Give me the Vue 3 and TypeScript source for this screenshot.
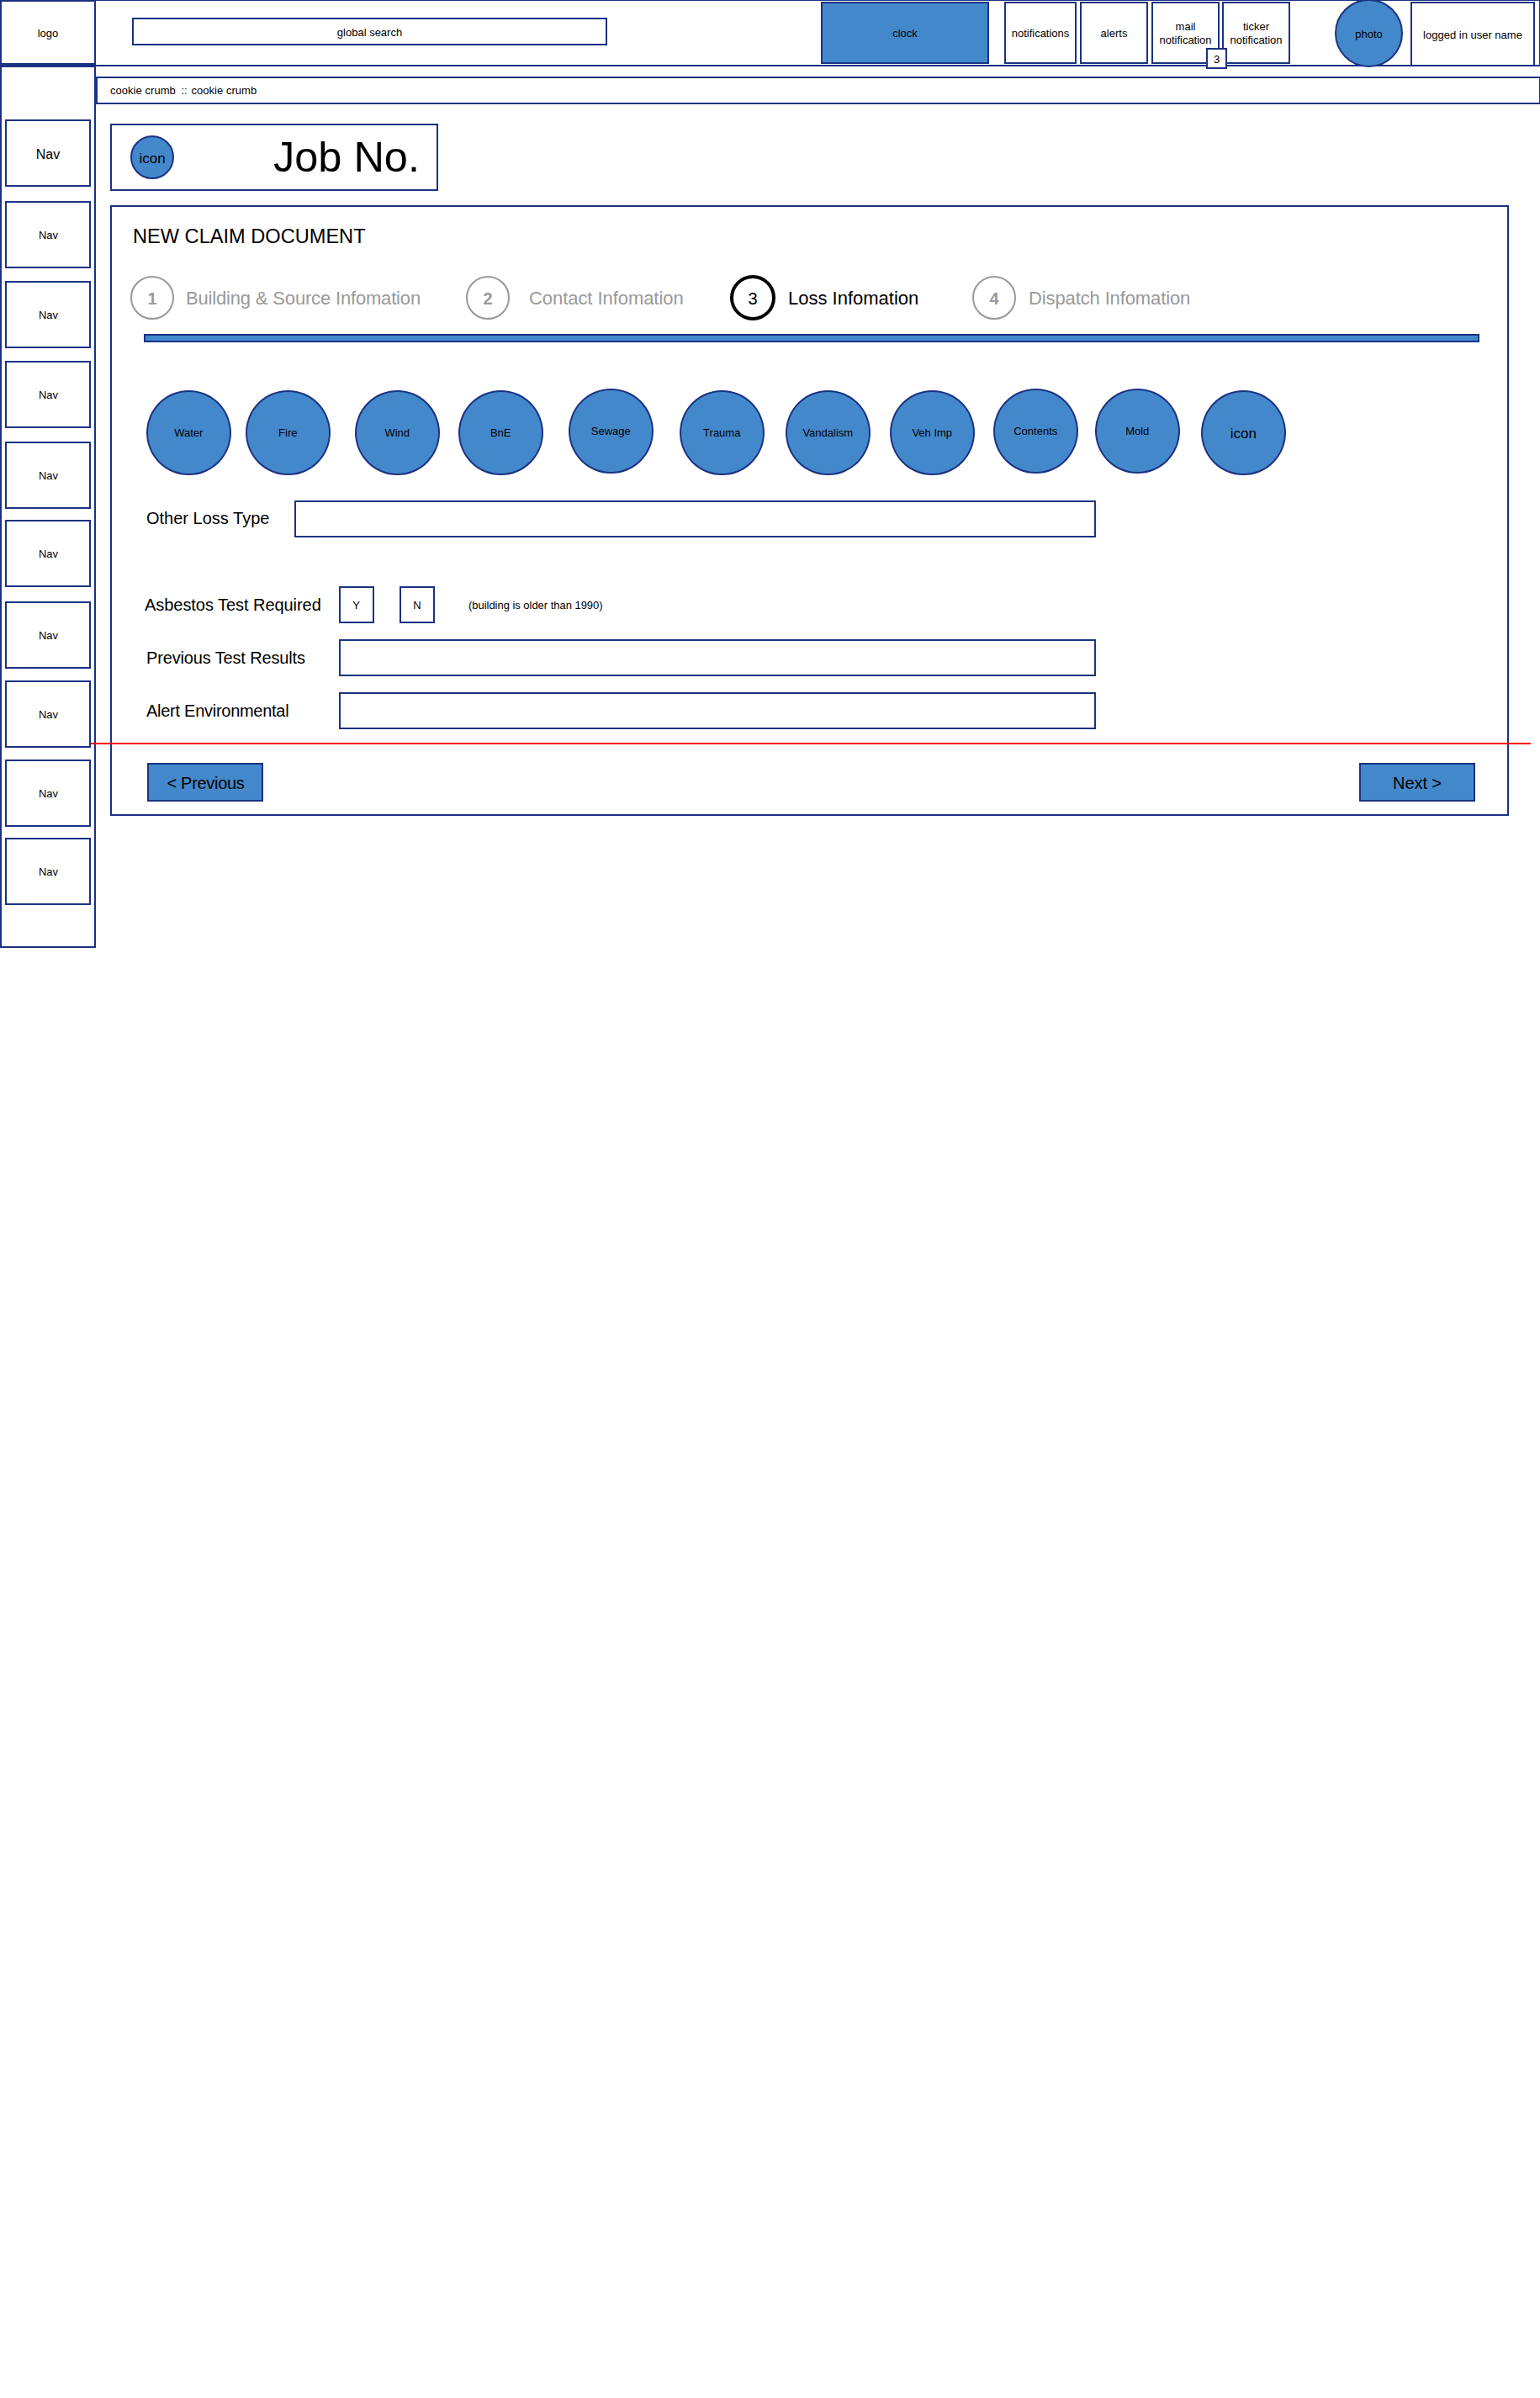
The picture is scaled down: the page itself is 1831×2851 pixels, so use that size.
<script setup lang="ts">
interface NavItem { label: string; gap: number; large?: boolean }
interface Step { no: number; label: string; width: number; gap: number; spacing: number; active?: boolean }
interface LossType { label: string; gap: number; raised?: boolean; large?: boolean }

const navItems: NavItem[] = [
  { label: 'Nav', gap: 62, large: true },
  { label: 'Nav', gap: 17 },
  { label: 'Nav', gap: 15 },
  { label: 'Nav', gap: 15 },
  { label: 'Nav', gap: 16 },
  { label: 'Nav', gap: 13 },
  { label: 'Nav', gap: 17 },
  { label: 'Nav', gap: 14 },
  { label: 'Nav', gap: 14 },
  { label: 'Nav', gap: 13 },
]

const steps: Step[] = [
  { no: 1, label: 'Building & Source Infomation', width: 399, gap: 14, spacing: -0.17 },
  { no: 2, label: 'Contact Infomation', width: 314, gap: 23, spacing: -0.06 },
  { no: 3, label: 'Loss Infomation', width: 288, gap: 15, spacing: 0, active: true },
  { no: 4, label: 'Dispatch Infomation', width: 300, gap: 15, spacing: -0.12 },
]

const lossTypes: LossType[] = [
  { label: 'Water', gap: 0 },
  { label: 'Fire', gap: 18 },
  { label: 'Wind', gap: 30 },
  { label: 'BnE', gap: 23 },
  { label: 'Sewage', gap: 31, raised: true },
  { label: 'Trauma', gap: 32 },
  { label: 'Vandalism', gap: 26 },
  { label: 'Veh Imp', gap: 24 },
  { label: 'Contents', gap: 23, raised: true },
  { label: 'Mold', gap: 21, raised: true },
  { label: 'icon', gap: 26, large: true },
]
</script>

<template>
  <div class="page">
    <header class="header">
      <div class="box logo">logo</div>
      <div class="box search">global search</div>
      <div class="box clock">clock</div>
      <div class="box notifications">notifications</div>
      <div class="box tile alerts">alerts</div>
      <div class="box tile mail">
        <span>mail<br />notification</span>
        <div class="box badge">3</div>
      </div>
      <div class="box tile ticker"><span>ticker<br />notification</span></div>
      <div class="box photo">photo</div>
      <div class="box user">logged in user name</div>
    </header>

    <div class="body">
      <nav class="sidebar">
        <div
          v-for="(item, i) in navItems"
          :key="i"
          class="box nav-item"
          :class="{ large: item.large }"
          :style="{ marginTop: item.gap + 'px' }"
        >{{ item.label }}</div>
      </nav>

      <main class="main">
        <div class="crumbs">cookie crumb <i>::</i> cookie crumb</div>

        <section class="job">
          <div class="box job-icon">icon</div>
          <div class="job-no">Job No.</div>
        </section>

        <section class="panel">
          <h1 class="title">NEW CLAIM DOCUMENT</h1>

          <div class="steps">
            <div
              v-for="step in steps"
              :key="step.no"
              class="step"
              :class="{ active: step.active }"
              :style="{ width: step.width + 'px' }"
            >
              <span class="step-no">{{ step.no }}</span>
              <span
                class="step-label"
                :style="{ marginLeft: step.gap + 'px', letterSpacing: step.spacing + 'px' }"
              >{{ step.label }}</span>
            </div>
          </div>
          <div class="progress"></div>

          <div class="losses">
            <div
              v-for="loss in lossTypes"
              :key="loss.label"
              class="box loss"
              :class="{ raised: loss.raised, large: loss.large }"
              :style="{ marginLeft: loss.gap + 'px' }"
            >{{ loss.label }}</div>
          </div>

          <div class="row other">
            <label>Other Loss Type</label>
            <div class="field"></div>
          </div>
          <div class="row asbestos">
            <label>Asbestos Test Required</label>
            <div class="box choice">Y</div>
            <div class="box choice no">N</div>
            <span class="note">(building is older than 1990)</span>
          </div>
          <div class="row previous-results">
            <label>Previous Test Results</label>
            <div class="field"></div>
          </div>
          <div class="row environmental">
            <label>Alert Environmental</label>
            <div class="field"></div>
          </div>

          <div class="actions">
            <div class="box button previous">&lt; Previous</div>
            <div class="box button">Next &gt;</div>
          </div>
        </section>
      </main>
    </div>

    <div class="fold-line"></div>
  </div>
</template>

<style>
body {
  margin: 0;
  background: #fff;
}
</style>

<style scoped>
.page {
  position: relative;
  width: 1831px;
  height: 2851px;
  overflow: hidden;
  font: 13px/16px "Liberation Sans", Arial, sans-serif;
  color: #000;
  background: #fff;
}
.page * {
  box-sizing: border-box;
}
.box {
  display: flex;
  flex: none;
  align-items: center;
  justify-content: center;
  padding-top: 2px;
  border: 2px solid #1b3283;
  text-align: center;
  white-space: nowrap;
}
.header {
  display: flex;
  align-items: flex-start;
  height: 79px;
  border: solid #1b3283;
  border-width: 1px 1px 2px 2px;
}
.logo {
  width: 114px;
  height: 77px;
  margin: -1px 0 0 -2px;
}
.search {
  width: 565px;
  height: 33px;
  margin: 20px 0 0 43px;
}
.clock {
  width: 200px;
  height: 74px;
  margin: 1px 0 0 254px;
  background: #4488cc;
}
.notifications {
  width: 86px;
  height: 74px;
  margin: 1px 0 0 18px;
}
.tile {
  width: 81px;
  height: 74px;
  margin: 1px 0 0 4px;
}
.mail {
  position: relative;
}
.ticker {
  margin-left: 3px;
}
.badge {
  position: absolute;
  z-index: 1;
  left: 63px;
  top: 53px;
  width: 25px;
  height: 25px;
  background: #fff;
}
.photo {
  width: 81px;
  height: 81px;
  margin: -2px 0 0 53px;
  border-radius: 50%;
  background: #4488cc;
}
.user {
  width: 148px;
  height: 77px;
  margin: 1px 0 0 9px;
  padding-top: 3px;
}
.body {
  display: flex;
  align-items: flex-start;
}
.sidebar {
  display: flex;
  flex: none;
  flex-direction: column;
  width: 114px;
  height: 1049px;
  margin-top: -1px;
  padding-left: 4px;
  border: 2px solid #1b3283;
}
.nav-item {
  width: 102px;
  height: 80px;
  padding-left: 1px;
}
.nav-item.large {
  padding: 3px 0 0;
  font-size: 16px;
}
.main {
  flex: none;
  width: 1717px;
}
.crumbs {
  height: 33px;
  margin-top: 12px;
  padding: 7px 0 0 15px;
  border: solid #1b3283;
  border-width: 2px 1px 2px 2px;
  letter-spacing: 0.04px;
  white-space: nowrap;
}
.crumbs i {
  margin: 0 1px 0 3px;
  font-style: normal;
}
.job {
  display: flex;
  align-items: center;
  justify-content: space-between;
  width: 390px;
  height: 80px;
  margin: 23px 0 0 17px;
  padding: 0 20px 0 22px;
  border: 2px solid #1b3283;
}
.job-icon {
  width: 52px;
  height: 52px;
  padding-top: 3px;
  border-radius: 50%;
  font-size: 17px;
  background: #4488cc;
}
.job-no {
  font-size: 50.5px;
  line-height: 60px;
}
.panel {
  width: 1663px;
  height: 726px;
  margin: 17px 0 0 17px;
  border: 2px solid #1b3283;
}
.title {
  margin: 21px 0 0 25px;
  font-size: 23.6px;
  font-weight: normal;
  line-height: 28px;
}
.steps {
  display: flex;
  align-items: center;
  height: 54px;
  margin: 32px 0 0 22px;
}
.step {
  display: flex;
  flex: none;
  align-items: center;
  color: #999;
  font-size: 22px;
  line-height: 26px;
  white-space: nowrap;
}
.step-label {
  padding-top: 2px;
}
.step-no {
  display: flex;
  flex: none;
  align-items: center;
  justify-content: center;
  width: 52px;
  height: 52px;
  padding-top: 2px;
  border: 2px solid #999;
  border-radius: 50%;
  font-size: 20px;
  font-weight: bold;
}
.step.active {
  color: #000;
}
.active .step-no {
  width: 54px;
  height: 54px;
  border: 4px solid #000;
  font-weight: normal;
}
.progress {
  width: 1588px;
  height: 10px;
  margin: 16px 0 0 38px;
  border: 2px solid #1b3283;
  background: #4488cc;
}
.losses {
  display: flex;
  align-items: flex-end;
  height: 103px;
  margin: 55px 0 0 41px;
}
.loss {
  width: 100.5px;
  height: 101px;
  margin-right: -0.5px;
  padding-top: 0;
  border-radius: 50%;
  background: #4488cc;
}
.loss.raised {
  align-self: flex-start;
}
.loss.large {
  padding-top: 2px;
  font-size: 17px;
}
.row {
  display: flex;
  align-items: center;
  height: 44px;
  margin: 19px 0 0 41px;
}
.row label {
  flex: none;
  width: 229px;
  font-size: 20px;
  line-height: 24px;
  white-space: nowrap;
}
.field {
  width: 900px;
  height: 44px;
  border: 2px solid #1b3283;
}
.row.other {
  margin-top: 30px;
}
.other label {
  width: 176px;
  padding-bottom: 2px;
}
.other .field {
  width: 953px;
}
.row.asbestos {
  margin: 58px 0 0 39px;
}
.asbestos label {
  width: 231px;
  letter-spacing: -0.05px;
}
.previous-results label {
  letter-spacing: -0.15px;
}
.environmental label {
  letter-spacing: -0.27px;
}
.choice {
  width: 42px;
  height: 44px;
  padding-right: 1px;
}
.choice.no {
  margin-left: 30px;
  padding-right: 0;
}
.note {
  margin-left: 39px;
  padding: 2px 0 0 1px;
  letter-spacing: -0.03px;
}
.actions {
  display: flex;
  justify-content: space-between;
  margin: 40px 38px 0 42px;
}
.button {
  width: 138px;
  height: 46px;
  background: #4488cc;
  font-size: 20px;
  line-height: 24px;
  letter-spacing: -0.1px;
}
.button.previous {
  padding-left: 1px;
  letter-spacing: -0.3px;
}
.fold-line {
  position: absolute;
  left: 108px;
  top: 883px;
  width: 1712px;
  height: 2px;
  background: #f00;
}
</style>
